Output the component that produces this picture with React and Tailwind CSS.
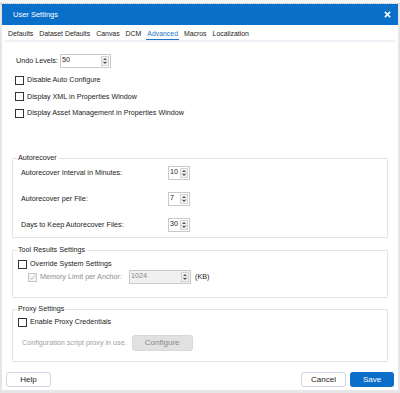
import React from "react";

const font = "font-['Liberation_Sans',Arial,sans-serif]";

function Spin({ value, w = "w-[22px]", disabled = false }) {
  return (
    <div
      className={`flex items-stretch h-[14px] border border-[#c9c9c9] ${w} ${
        disabled ? "bg-[#f0f0f0] text-[#8a8a8a]" : "bg-white text-[#222]"
      }`}
    >
      <div className="flex-1 text-[7.2px] leading-[10px] pl-[1px]">{value}</div>
      <div className="w-[8px] my-[1px] mr-[1px] flex flex-col border border-[#d4d4d4] bg-[#f2f2f2]">
        <div className="flex-1 flex items-center justify-center border-b border-[#d4d4d4]">
          <div className="w-0 h-0 border-l-[2px] border-r-[2px] border-b-[2px] border-l-transparent border-r-transparent border-b-[#555]" />
        </div>
        <div className="flex-1 flex items-center justify-center">
          <div className="w-0 h-0 border-l-[2px] border-r-[2px] border-t-[2px] border-l-transparent border-r-transparent border-t-[#555]" />
        </div>
      </div>
    </div>
  );
}

function Check({ label, disabled = false, checked = false }) {
  return (
    <div className="flex items-center gap-[3px]">
      <div
        className={`w-[9px] h-[9px] border flex items-center justify-center ${
          disabled ? "border-[#c4c4c4] bg-[#f6f6f6]" : "border-[#333] bg-white"
        }`}
      >
        {checked && (
          <svg width="7" height="7" viewBox="0 0 8 8">
            <path d="M1 4.2 L3 6.2 L7 1.5" fill="none" stroke="#aaa" strokeWidth="0.9" />
          </svg>
        )}
      </div>
      <span className={disabled ? "text-[#8d8d8d]" : "text-[#222]"}>{label}</span>
    </div>
  );
}

function Group({ title, className = "", children }) {
  return (
    <div className={`relative border border-[#e3e3e3] rounded-[1px] ${className}`}>
      <div className="absolute -top-[6px] left-[4px] bg-white px-[1px] leading-[10px] text-[#222]">
        {title}
      </div>
      {children}
    </div>
  );
}

export default function App() {
  const tabs = ["Defaults", "Dataset Defaults", "Canvas", "DCM", "Advanced", "Macros", "Localization"];
  return (
    <div className={`w-[400px] h-[393px] bg-[#f3f3f3] flex flex-col ${font} text-[7.2px] leading-[10px]`}>
      <div className="h-[4px] border-b border-dotted border-[#b9c2cc] bg-[#f4f6f8]" />
      <div className="flex-1 flex flex-col bg-white border-x-[2px] border-b-[3px] border-[#e6e6e6]">
        <div className="h-[21px] bg-[#0a6fc9] flex items-center justify-between pl-[11px] pr-[7px]">
          <span className="text-white text-[7.5px] pt-[1px]">User Settings</span>
          <svg width="7" height="7" viewBox="0 0 8 8">
            <path d="M1 1 L7 7 M7 1 L1 7" stroke="white" strokeWidth="1.8" />
          </svg>
        </div>
        <div className="flex gap-[4px] pl-[5px] pt-[4px] h-[15px] text-[#222] text-[6.9px]">
          {tabs.map((t) => (
            <div
              key={t}
              className={
                t === "Advanced"
                  ? "text-[#1f73c8] border-b border-[#1f73c8] h-[11px] px-[1px]"
                  : "px-[1px]"
              }
            >
              {t}
            </div>
          ))}
        </div>
        <div className="mx-[3px] h-[2px] bg-[#eef1f6]" />

        <div className="px-[14px] pt-[12px] flex items-center gap-[2px]">
          <span className="text-[#222]">Undo Levels:</span>
          <Spin value="50" w="w-[51px]" />
        </div>
        <div className="pl-[13px] pt-[7px] flex flex-col gap-[6.5px]">
          <Check label="Disable Auto Configure" />
          <Check label="Display XML in Properties Window" />
          <Check label="Display Asset Management in Properties Window" />
        </div>

        <div className="px-[10px] mt-[40px] flex flex-col">
          <Group title="Autorecover" className="h-[80px] pl-[8px] pt-[7px]">
            <div className="flex flex-col gap-[12px]">
              {[
                ["Autorecover Interval in Minutes:", "10"],
                ["Autorecover per File:", "7"],
                ["Days to Keep Autorecover Files:", "30"],
              ].map(([l, v]) => (
                <div key={l} className="flex items-center">
                  <span className="w-[147px] text-[#222]">{l}</span>
                  <Spin value={v} />
                </div>
              ))}
            </div>
          </Group>

          <Group title="Tool Results Settings" className="mt-[12px] h-[48px] pl-[5px] pt-[8px]">
            <Check label="Override System Settings" />
            <div className="flex items-center pl-[10px] mt-[1px]">
              <div className="w-[101px]">
                <Check label="Memory Limit per Anchor:" disabled checked />
              </div>
              <Spin value="1024" w="w-[62px]" disabled />
              <span className="ml-[4px] text-[#222]">(KB)</span>
            </div>
          </Group>

          <Group title="Proxy Settings" className="mt-[11px] h-[53px] pl-[5px] pt-[7px]">
            <Check label="Enable Proxy Credentials" />
            <div className="flex items-center mt-[8px] pl-[4px] gap-[5px]">
              <span className="text-[#a0a0a0]">Configuration script proxy in use.</span>
              <div className="w-[61px] h-[16px] rounded-[3px] bg-[#e1e1e1] border border-[#d8d8d8] flex items-center justify-center text-[#8a8a8a] text-[8px]">
                Configure
              </div>
            </div>
          </Group>
        </div>

        <div className="mt-auto mb-[3px] px-[4px] flex items-center">
          <div className="w-[45px] h-[15px] rounded-[3px] border border-[#cfd6e4] flex items-center justify-center text-[#222] text-[8px]">
            Help
          </div>
          <div className="ml-auto w-[45px] h-[15px] rounded-[3px] border border-[#cfd6e4] flex items-center justify-center text-[#222] text-[8px]">
            Cancel
          </div>
          <div className="ml-[4px] w-[44px] h-[15px] rounded-[3px] bg-[#0b6ec9] flex items-center justify-center text-white text-[8px]">
            Save
          </div>
        </div>
      </div>
    </div>
  );
}
